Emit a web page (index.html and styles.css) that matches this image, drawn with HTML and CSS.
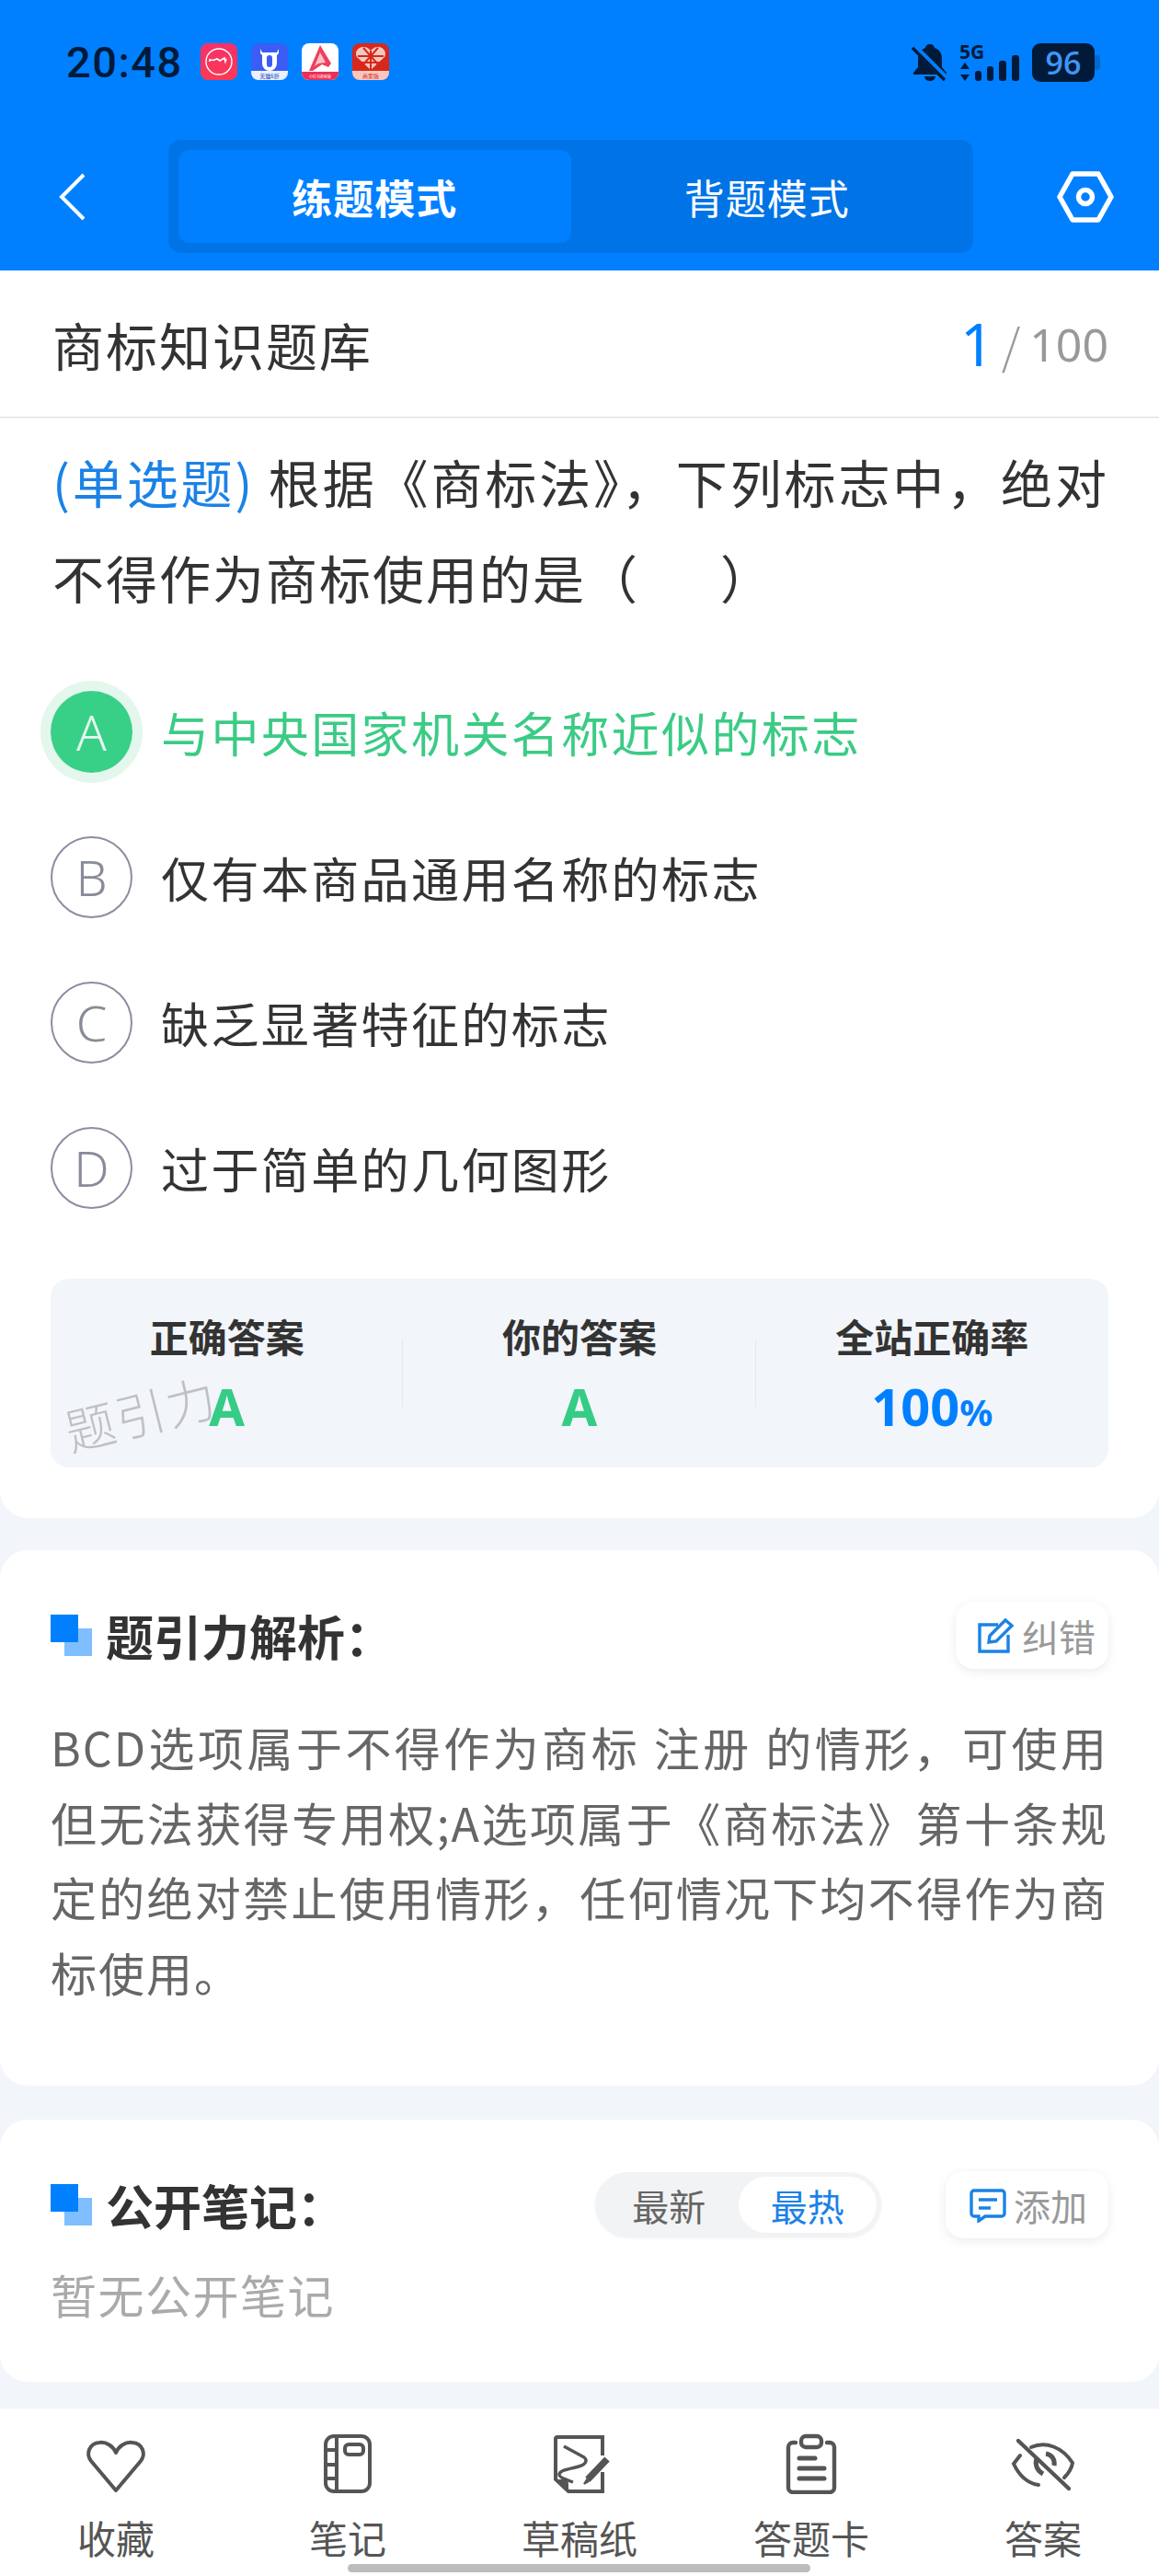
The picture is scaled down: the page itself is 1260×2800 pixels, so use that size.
FILE: index.html
```html
<!DOCTYPE html>
<html lang="zh">
<head>
<meta charset="utf-8">
<title>商标知识题库</title>
<link rel="stylesheet" href="styles.css">
</head>
<body>
<div class="page">
  <header class="header">
    <div class="status">
      <span class="time">20:48</span>
      <div class="apps">
        <svg class="app" viewBox="0 0 40 40"><defs><linearGradient id="g1" x1="0" y1="0" x2="0" y2="1"><stop offset="0" stop-color="#f5316b"/><stop offset="1" stop-color="#fb3a55"/></linearGradient></defs><rect width="40" height="40" rx="8" fill="url(#g1)"/><circle cx="20" cy="20" r="14" fill="none" stroke="#fff" stroke-width="1.4"/><path d="M10 20v-2l4 .5 4-1.5 3 2 5-3 1 4 1-3" fill="none" stroke="#fff" stroke-width="1.6"/></svg>
        <svg class="app" viewBox="0 0 40 40"><rect width="40" height="40" rx="8" fill="#3b5cf5"/><path d="M0 30h40v2a8 8 0 0 1-8 8H8a8 8 0 0 1-8-8z" fill="#eaf0ff"/><path d="M10 6l2 4h16l2-4v5l-2 2v9a8 8 0 0 1-16 0v-9l-2-2z" fill="#fff"/><rect x="17" y="13" width="6" height="13" rx="3" fill="#3b5cf5"/><text class="app-label app-label-blue" x="20" y="38">天猫6折</text></svg>
        <svg class="app" viewBox="0 0 40 40"><rect width="40" height="40" rx="8" fill="#fff"/><path d="M0 31h40v1a8 8 0 0 1-8 8H8a8 8 0 0 1-8-8z" fill="#ee2f55"/><path d="M20 2l12 20-3 4-7-3-10 7h-4z" fill="#f0405f"/><path d="M20 10l6 11-8 1-4 3z" fill="#fbc2cc"/><text class="app-label app-label-white" x="20" y="38">小红书商家版</text></svg>
        <svg class="app" viewBox="0 0 40 40"><rect width="40" height="40" rx="8" fill="#d8281c"/><path d="M0 30h40v2a8 8 0 0 1-8 8H8a8 8 0 0 1-8-8z" fill="#f7c8c0"/><path d="M20 29L5 15c-3-5 1-11 7-11 4 0 6 2 8 4 2-2 4-4 8-4 6 0 10 6 7 11z" fill="#f5c9c0"/><path d="M20 8v21M6 14h28M9 21h22M12 5l16 18M28 5L12 23" stroke="#d8281c" stroke-width="2"/><text class="app-label app-label-red" x="20" y="38">商家版</text></svg>
      </div>
      <div class="sys">
        <svg class="bell" viewBox="0 0 40 42"><path d="M20 1c3 0 5 2 5 4 6 2 8 7 8 12v9l5 6v2H2v-2l5-6v-9c0-5 2-10 8-12 0-2 2-4 5-4zM14 36h12c0 3-3 5-6 5s-6-2-6-5z" fill="#021a3a"/><path d="M3 4l35 35" stroke="#0080ff" stroke-width="7"/><path d="M1 5l35 35" stroke="#021a3a" stroke-width="3.4"/></svg>
        <svg class="net" viewBox="0 0 66 42"><text class="net-text" x="0" y="17">5G</text><path d="M6 21l5 7H1zM6 41l5-7H1z" fill="#021a3a"/><rect x="17" y="30" width="7" height="11" rx="3" fill="#021a3a"/><rect x="30" y="25" width="7" height="16" rx="3" fill="#021a3a"/><rect x="43" y="19" width="8" height="22" rx="3" fill="#021a3a"/><rect x="57" y="13" width="8" height="28" rx="3" fill="#021a3a"/></svg>
        <div class="battery"><span class="battery-level">96</span><span class="battery-nub"></span></div>
      </div>
    </div>
    <nav class="nav">
      <svg class="back" viewBox="0 0 30 52"><path d="M27 2L3 26l24 24" fill="none" stroke="#fff" stroke-width="4"/></svg>
      <div class="segment">
        <div class="seg seg-active">练题模式</div>
        <div class="seg">背题模式</div>
      </div>
      <svg class="hex" viewBox="0 0 62 56"><path d="M17 3h28l14 25-14 25H17L3 28z" fill="none" stroke="#fff" stroke-width="5.5" stroke-linejoin="round"/><circle cx="31" cy="28" r="7.5" fill="none" stroke="#fff" stroke-width="5.5"/></svg>
    </nav>
  </header>

  <main>
    <section class="card-question">
      <div class="title-row">
        <h1 class="bank">商标知识题库</h1>
        <div class="count"><span class="count-now">1</span><span class="count-sep">/</span><span class="count-all">100</span></div>
      </div>
      <p class="question"><span class="q-type">(单选题)</span> 根据《商标法》，下列标志中，绝对不得作为商标使用的是（&emsp;&ensp;）</p>
      <ul class="options">
        <li class="option option-right"><span class="letter letter-right">A</span><span>与中央国家机关名称近似的标志</span></li>
        <li class="option"><span class="letter">B</span><span>仅有本商品通用名称的标志</span></li>
        <li class="option"><span class="letter">C</span><span>缺乏显著特征的标志</span></li>
        <li class="option"><span class="letter">D</span><span>过于简单的几何图形</span></li>
      </ul>
      <div class="stats">
        <div class="stat"><div class="stat-label">正确答案</div><div class="stat-value green">A</div></div>
        <div class="stat stat-line"><div class="stat-label">你的答案</div><div class="stat-value green">A</div></div>
        <div class="stat stat-line"><div class="stat-label">全站正确率</div><div class="stat-value blue">100<span class="pct">%</span></div></div>
        <span class="watermark">题引力</span>
      </div>
    </section>

    <section class="card card-analysis">
      <div class="card-head">
        <h2 class="card-title"><span class="mark"></span>题引力解析：</h2>
        <button class="pill-btn">
          <svg class="btn-icon" viewBox="0 0 40 38"><path d="M22 7H2v29h31V18" fill="none" stroke="#1b82e6" stroke-width="3.4"/><path d="M13 19L30 2l7 6-17 17-8 1z" fill="none" stroke="#1b82e6" stroke-width="3.4"/></svg>
          <span>纠错</span>
        </button>
      </div>
      <p class="analysis">BCD选项属于不得作为商标 注册 的情形，可使用但无法获得专用权;A选项属于《商标法》第十条规定的绝对禁止使用情形，任何情况下均不得作为商标使用。</p>
    </section>

    <section class="card card-notes">
      <div class="card-head">
        <h2 class="card-title"><span class="mark"></span>公开笔记：</h2>
        <div class="head-right">
          <div class="toggle"><span class="toggle-item">最新</span><span class="toggle-item toggle-on">最热</span></div>
          <button class="pill-btn pill-add">
            <svg class="btn-icon" viewBox="0 0 40 38"><path d="M5 3h30a3 3 0 0 1 3 3v22a3 3 0 0 1-3 3H17l-7 5v-5H5a3 3 0 0 1-3-3V6a3 3 0 0 1 3-3z" fill="none" stroke="#1b82e6" stroke-width="3.4"/><path d="M10 13h20M10 22h13" stroke="#1b82e6" stroke-width="3.4"/></svg>
            <span>添加</span>
          </button>
        </div>
      </div>
      <p class="empty">暂无公开笔记</p>
    </section>
  </main>

  <footer class="tabbar">
    <div class="tab">
      <svg class="tab-icon" viewBox="0 0 70 66"><path d="M35 62L8 30C2 22 6 11 17 10c8-1 15 4 18 11 3-7 10-12 18-11 11 1 15 12 9 20z" fill="none" stroke="#555" stroke-width="4" stroke-linejoin="round"/></svg>
      <span>收藏</span>
    </div>
    <div class="tab">
      <svg class="tab-icon" viewBox="0 0 70 66"><rect x="11" y="3" width="48" height="60" rx="9" fill="none" stroke="#555" stroke-width="4"/><path d="M23 3v60M11 18h12M11 34h12M11 49h12" stroke="#555" stroke-width="4" fill="none"/><rect x="32" y="12" width="20" height="11" rx="4" fill="none" stroke="#555" stroke-width="4"/></svg>
      <span>笔记</span>
    </div>
    <div class="tab">
      <svg class="tab-icon" viewBox="0 0 70 66"><path d="M60 24V4H11a2 2 0 0 0-2 2v44l14 13h37V42" fill="none" stroke="#555" stroke-width="4"/><path d="M9 50h9a5 5 0 0 1 5 5v8z" fill="#555"/><path d="M18 14l22 12c4 3 2 8-6 10-10 3-19 3-21 8-1 3 6 6 15 9" fill="none" stroke="#555" stroke-width="3.4"/><path d="M65 28L44 50" stroke="#555" stroke-width="7.5"/><path d="M40 55l3-5 2 2z" fill="#555" stroke="#555" stroke-width="2"/></svg>
      <span>草稿纸</span>
    </div>
    <div class="tab">
      <svg class="tab-icon" viewBox="0 0 70 66"><path d="M18 10h-3a5 5 0 0 0-5 5v44a5 5 0 0 0 5 5h40a5 5 0 0 0 5-5V15a5 5 0 0 0-5-5h-3" fill="none" stroke="#555" stroke-width="4.4" stroke-linecap="round"/><rect x="24" y="3" width="22" height="12" rx="5" fill="none" stroke="#555" stroke-width="4.4"/><path d="M22 27h17M22 38h27M22 49h27" stroke="#555" stroke-width="5" stroke-linecap="round"/></svg>
      <span>答题卡</span>
    </div>
    <div class="tab">
      <svg class="tab-icon" viewBox="0 0 70 66"><path d="M10 24l-7 9c6 13 14 21 27 23M22 15c16-7 34 0 45 17-1 7-5 12-9 16" fill="none" stroke="#555" stroke-width="4" stroke-linecap="round"/><path d="M29 26c-3 4-3 13 6 18M38 22c7 1 10 7 9 13" fill="none" stroke="#555" stroke-width="5"/><path d="M8 8l55 52" stroke="#555" stroke-width="4.4" stroke-linecap="round"/></svg>
      <span>答案</span>
    </div>
    <span class="home-bar"></span>
  </footer>
</div>
</body>
</html>
```
FILE: styles.css
```css
* { box-sizing: border-box; margin: 0; padding: 0; }
html, body { background: #f2f5f9; }
body { width: 1260px; height: 2800px; overflow: hidden; font-family: "Noto Sans CJK SC", "Noto Sans", sans-serif; color: #333; }
.page { display: flex; flex-direction: column; height: 2800px; }

.header { height: 294px; background: #0080ff; flex: none; }
.status { height: 152px; padding: 47px 70px 0 72px; display: flex; align-items: flex-start; }
.time { font-family: Roboto, sans-serif; font-weight: 500; font-size: 47px; line-height: 42px; letter-spacing: 1.5px; color: #021a3a; width: 146px; }
.apps { display: flex; gap: 15px; }
.app { width: 40px; height: 40px; display: block; }
.app-label { font-size: 6px; text-anchor: middle; font-family: "Noto Sans CJK SC", sans-serif; }
.app-label-blue { fill: #2240c0; }
.app-label-white { fill: #fff; font-size: 4px; }
.app-label-red { fill: #d8281c; }
.sys { margin-left: auto; display: flex; align-items: flex-start; gap: 12px; }
.bell { width: 40px; height: 42px; display: block; }
.net { width: 66px; height: 42px; display: block; margin-right: 1px; }
.net-text { font-family: "Open Sans", sans-serif; font-weight: 700; font-size: 21px; fill: #021a3a; }
.battery { position: relative; width: 68px; height: 42px; background: #021a3a; border-radius: 9px; display: flex; align-items: center; justify-content: center; }
.battery-level { font-family: "Open Sans", sans-serif; font-weight: 600; font-size: 34px; line-height: 42px; color: #3f97f5; }
.battery-nub { position: absolute; left: 68px; top: 13px; width: 6px; height: 16px; border-radius: 0 4px 4px 0; background: #0468cf; }

.nav { height: 123px; padding: 0 49px 0 64px; display: flex; align-items: center; justify-content: space-between; }
.back { width: 30px; height: 52px; display: block; }
.segment { width: 875px; height: 123px; margin-left: -2px; padding: 11px; border-radius: 14px; background: #0074e6; display: flex; }
.seg { flex: 1; display: flex; align-items: center; justify-content: center; color: #fff; font-size: 44px; letter-spacing: 1px; }
.seg-active { background: #0080ff; border-radius: 12px; font-weight: 700; }
.hex { width: 62px; height: 56px; display: block; }

main { flex: 1; min-height: 0; }
.card-question { background: #fff; border-radius: 0 0 30px 30px; padding-bottom: 55px; }
.title-row { height: 160px; padding: 0 55px 0 57px; border-bottom: 1px solid #d9d9d9; display: flex; align-items: center; justify-content: space-between; }
.bank { font-size: 56px; font-weight: 400; letter-spacing: 2px; color: #333; }
.count { display: flex; align-items: center; color: #999; }
.count-now { font-size: 64px; line-height: 80px; color: #0080ff; font-family: "Noto Sans", sans-serif; }
.count-sep { font-size: 52px; margin: 0 10px 0 8px; font-weight: 300; }
.count-all { font-size: 50px; font-family: "Noto Sans", sans-serif; }
.question { padding: 17px 55px 0 57px; font-size: 56px; line-height: 104px; letter-spacing: 2px; text-align: justify; color: #333; height: 225px; }
.q-type { color: #1b82e6; }
.options { list-style: none; padding-top: 37px; }
.option { height: 158px; padding-left: 55px; display: flex; align-items: center; gap: 31px; font-size: 52px; letter-spacing: 2.4px; color: #333; }
.option-right { color: #3bcb85; }
.letter { width: 89px; height: 89px; border-radius: 50%; border: 2px solid #8b8e9f; display: flex; align-items: center; justify-content: center; font-size: 54px; font-weight: 300; color: #888b99; letter-spacing: 0; font-family: "Noto Sans", sans-serif; flex: none; }
.letter-right { background: #38d086; border: none; color: #e6f9ef; box-shadow: 0 0 0 11px #e3f7ec; }
.stats { position: relative; margin: 42px 55px 0; height: 205px; background: #f2f5f9; border-radius: 20px; display: flex; }
.stat { flex: 1; position: relative; display: flex; flex-direction: column; align-items: center; padding-top: 32px; }
.stat-line::before { content: ""; position: absolute; left: -1px; top: 66px; width: 1px; height: 73px; background: #e6e8ec; }
.stat-label { font-size: 42px; font-weight: 700; line-height: 60px; color: #333; }
.stat-value { font-size: 56px; font-weight: 700; line-height: 76px; margin-top: 8px; font-family: "Noto Sans", sans-serif; }
.green { color: #35cc85; }
.blue { color: #0080ff; }
.pct { font-size: 40px; }
.watermark { position: absolute; left: 14px; top: 110px; font-size: 54px; font-weight: 300; line-height: 70px; letter-spacing: 2px; color: #bfc0c3; transform: rotate(-14deg); }

.card { background: #fff; border-radius: 30px; padding: 56px 55px 0; }
.card-analysis { margin-top: 35px; height: 582px; }
.card-notes { margin-top: 37px; height: 285px; }
.card-head { height: 73px; display: flex; align-items: center; justify-content: space-between; }
.card-title { position: relative; padding-left: 60px; font-size: 52px; font-weight: 700; line-height: 73px; color: #333; }
.mark { position: absolute; left: 0; top: 14px; width: 30px; height: 30px; background: #0080ff; box-shadow: none; }
.mark::after { content: ""; position: absolute; left: 15px; top: 15px; width: 30px; height: 30px; background: rgba(0, 128, 255, .5); }
.pill-btn { width: 166px; height: 73px; border: none; border-radius: 20px; background: #fff; box-shadow: 0 3px 12px rgba(0, 0, 0, .08); display: flex; align-items: center; gap: 8px; padding-left: 24px; font-family: inherit; font-size: 40px; color: #999; }
.btn-icon { width: 40px; height: 38px; display: block; flex: none; }
.analysis { margin-top: 44px; font-size: 50px; line-height: 81.5px; letter-spacing: 2px; text-align: justify; color: #666; }
.head-right { display: flex; align-items: center; gap: 70px; }
.toggle { width: 311px; height: 71px; padding: 5px; border-radius: 36px; background: #f2f3f5; display: flex; justify-content: space-between; align-items: center; box-shadow: 0 1px 3px rgba(0, 0, 0, .05); }
.toggle-item { width: 151px; height: 61px; border-radius: 31px; display: flex; align-items: center; justify-content: center; font-size: 40px; color: #666; }
.toggle-on { background: #fff; color: #1b82e6; }
.pill-add { width: 177px; padding-left: 26px; }
.empty { margin-top: 20px; font-size: 50px; line-height: 81px; letter-spacing: 1.5px; color: #aaa; }

.tabbar { position: relative; flex: none; height: 182px; background: #fff; display: flex; padding-top: 27px; }
.tab { flex: 1; display: flex; flex-direction: column; align-items: center; font-size: 42px; line-height: 60px; color: #555; }
.tab-icon { width: 70px; height: 66px; display: block; margin-bottom: 17px; }
.home-bar { position: absolute; left: 378px; top: 169px; width: 503px; height: 9px; border-radius: 5px; background: #bdbdbd; }
```
